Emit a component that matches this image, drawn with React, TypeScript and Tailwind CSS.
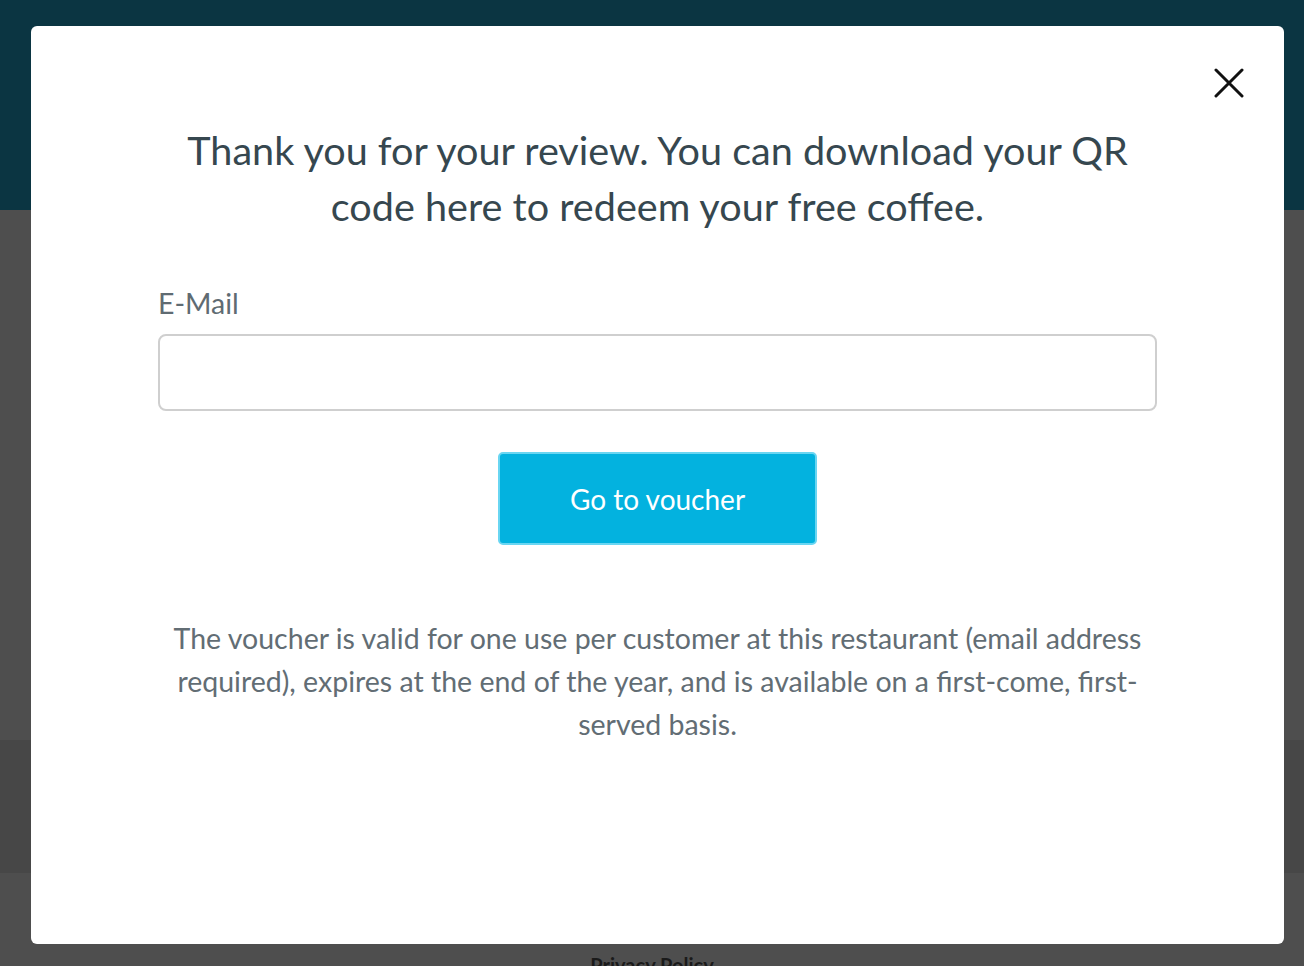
import React from "react";

function CloseIcon() {
  return (
    <svg width="30" height="30" viewBox="0 0 30 30" fill="none">
      <path d="M2 2 L28 28 M28 2 L2 28" stroke="#111" strokeWidth="3" strokeLinecap="round" />
    </svg>
  );
}

export default function App() {
  const [email, setEmail] = React.useState("");

  return (
    <div className="relative w-[1304px] h-[966px] overflow-hidden bg-[#4e4e4e]" style={{ fontFamily: "Lato, 'Open Sans', sans-serif" }}>

      {/* page behind the overlay */}
      <div className="flex flex-col">
        <div className="h-[210px] bg-[#0b3542]" />
        <div className="h-[530px]" />
        <div className="h-[133px] bg-[#474747]" />
        <div className="h-[82px]" />
        <div className="flex justify-center">
          <span className="text-[20px] font-bold text-[#1a1a1a] leading-none">Privacy Policy</span>
        </div>
      </div>

      {/* modal */}
      <div className="absolute left-[31px] top-[26px] w-[1253px] h-[918px] bg-white rounded-[6px] px-[127px] pt-[96px]">

        <button className="absolute right-[40px] top-[42px] w-[30px] h-[30px] flex items-center justify-center">
          <CloseIcon />
        </button>

        <h2 className="text-center text-[39.6px] leading-[56px] text-[#36474f]">
          Thank you for your review. You can download your QR code here to redeem your free coffee.
        </h2>

        <label className="block mt-[53px] text-[28.5px] leading-[32px] text-[#5f6b72]">E-Mail</label>

        <input
          className="block mt-[15px] w-full h-[77px] border-2 border-[#cfcfcf] rounded-[8px] px-4 text-[24px] outline-none"
          value={email}
          onChange={(e) => setEmail(e.target.value)}
        />

        <div className="flex justify-center mt-[41px]">
          <button className="w-[319px] h-[93px] bg-[#03b2df] border-2 border-[#6ad6f2] rounded-[5px] text-white text-[28px]">
            Go to voucher
          </button>
        </div>

        <p className="mt-[72px] text-center text-[28.5px] leading-[43px] text-[#626d74]">
          The voucher is valid for one use per customer at this restaurant (email address required), expires at the end of the year, and is available on a first-come, first-served basis.
        </p>

      </div>
    </div>
  );
}
